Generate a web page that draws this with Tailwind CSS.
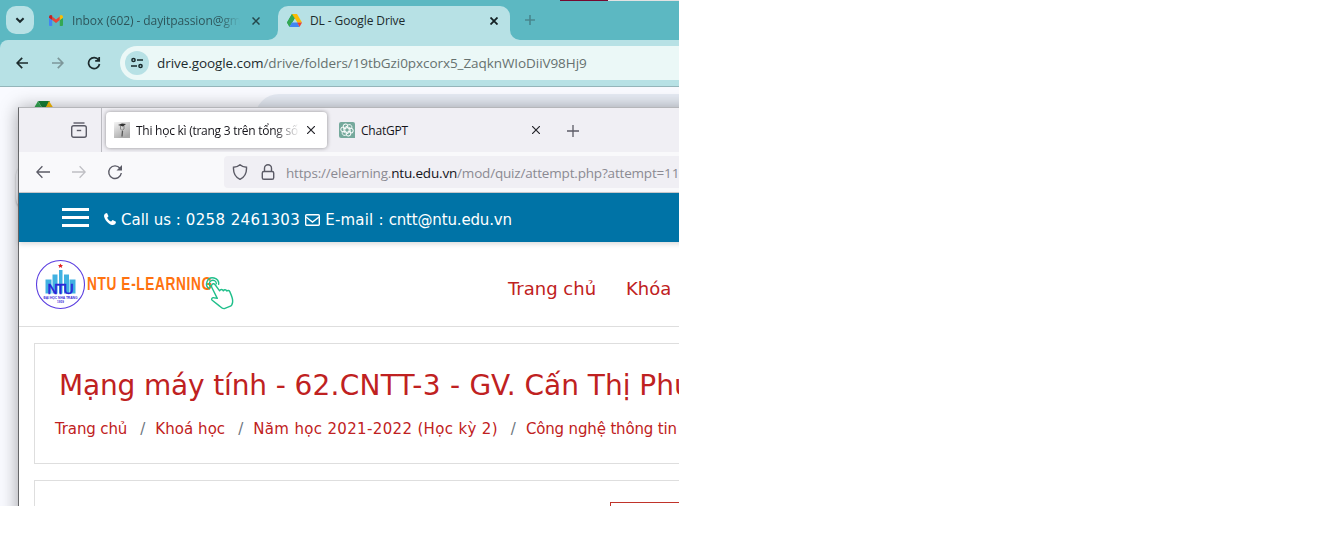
<!DOCTYPE html>
<html lang="vi">
<head>
<meta charset="utf-8">
<title>DL - Google Drive</title>
<script src="https://cdn.jsdelivr.net/npm/@tailwindcss/browser@4"></script>
</head>
<body class="bg-white">
<main class="relative flex h-[506px] w-[679px] flex-col overflow-hidden bg-[#f9faff] font-['Open_Sans','Noto_Sans',sans-serif]">

  <!-- Chrome tab strip -->
  <div class="flex h-10 shrink-0 items-end bg-[#5cb8c2]">
    <div class="ml-1.5 mb-[6px] flex h-7 w-7 items-center justify-center rounded-[10px] bg-[#b7e1e5]">
      <svg class="h-3 w-3" viewBox="0 0 12 12" fill="none" stroke="#1b2a2c" stroke-width="2"><path d="M2.400 4.200 6 7.800l3.600-3.600"/></svg>
    </div>
    <div class="flex h-[34px] w-[232px] items-center pb-[5px] pl-[15px]">
      <svg class="-mt-px h-[11px] w-[14px] shrink-0" viewBox="0 0 14 11"><path fill="#4285f4" d="M0 3v7a1 1 0 0 0 1 1h2.200V4.800z"/><path fill="#34a853" d="M14 3v7a1 1 0 0 1-1 1h-2.200V4.800z"/><path fill="#ea4335" d="M3.200 1.500 7 4.400l3.800-2.900v3.600L7 8 3.200 5.100z"/><path fill="#c5221f" d="M0 2C0 .2 2-.6 3.200.6v4.500L0 2.800z"/><path fill="#fbbc04" d="M14 2c0-1.800-2-2.600-3.200-1.400v4.500L14 2.800z"/></svg>
      <div class="mt-px ml-[9px] w-[168px] overflow-hidden whitespace-nowrap bg-linear-to-r from-[#2c5257] from-88% to-transparent bg-clip-text text-[12px] leading-5 tracking-[-0.08px] text-transparent">Inbox (602) - dayitpassion@gma</div>
      <svg class="ml-[12px] h-2 w-2 shrink-0" viewBox="0 0 8 8" stroke="#24474b" stroke-width="1.500"><path d="m.5.5 7 7m0-7-7 7"/></svg>
    </div>
    <div class="relative ml-[12px] flex h-[34px] w-[232px] items-center rounded-t-[10px] bg-[#b7e1e5] pb-[5px] pl-[9px]">
      <svg class="absolute bottom-0 -left-[10px] h-[10px] w-[10px]" viewBox="0 0 10 10"><path fill="#b7e1e5" d="M10 0v10H0A10 10 0 0 0 10 0"/></svg>
      <svg class="absolute -right-[10px] bottom-0 h-[10px] w-[10px]" viewBox="0 0 10 10"><path fill="#b7e1e5" d="M0 0v10h10A10 10 0 0 1 0 0"/></svg>
      <svg class="-mt-px h-[13px] w-[15px] shrink-0" viewBox="0 0 15 13"><path fill="#0f9d58" d="M5 0h2.500v4.700L2.500 12.500 0 8.600z"/><path fill="#34a853" d="M5 0h5L7.500 4.500 2.500 12.900 0 8.600z"/><path fill="#fbbc04" d="M5 0h5l5 8.600h-4.600z"/><path fill="#4285f4" d="M4.800 8.600h5.800l1.900 4.300h-10z"/><path fill="#ea4335" d="M10.200 8.600H15l-2.500 4.300z"/></svg>
      <span class="mt-px ml-2 whitespace-nowrap text-[12px] leading-5 tracking-[-0.11px] text-[#1d2b2d]">DL - Google Drive</span>
      <svg class="mr-3 ml-auto h-2 w-2 shrink-0" viewBox="0 0 8 8" stroke="#142124" stroke-width="1.800"><path d="m.5.5 7 7m0-7-7 7"/></svg>
    </div>
    <svg class="mb-[15px] ml-[15px] h-[10px] w-[10px]" viewBox="0 0 10 10" stroke="#48868e" stroke-width="1.600"><path d="M5 0v10M0 5h10"/></svg>
    <div class="ml-[25px] flex h-px flex-1 self-start"><div class="w-12 bg-[#76082f]"></div><div class="flex-1 bg-[#e2e2e2]"></div></div>
  </div>

  <!-- Chrome toolbar -->
  <div class="h-[46px] shrink-0 bg-[#5cb8c2]">
    <div class="flex h-[46px] items-center rounded-tl-[8px] bg-[#b7e1e5] pl-4">
      <svg class="h-3 w-3" viewBox="0 0 12 12" fill="none" stroke="#1c2b2d" stroke-width="1.700"><path d="M12 6H1.200M6.200.8 1.100 6l5.100 5.200"/></svg>
      <svg class="ml-6 h-3 w-3" viewBox="0 0 12 12" fill="none" stroke="#7d979a" stroke-width="1.700"><path d="M0 6h10.800M5.800.8 10.900 6l-5.100 5.200"/></svg>
      <svg class="ml-[23px] h-[14px] w-[14px]" viewBox="0 0 14 14" fill="none" stroke="#1c2b2d" stroke-width="1.700"><path d="M11.600 3.900A5.500 5.500 0 1 0 12.500 8M12.200.9v4H8.200"/></svg>
      <div class="ml-[19px] flex h-[34px] flex-1 items-center rounded-l-full bg-[#ebf8f7] pl-[5px]">
        <div class="flex h-6 w-6 items-center justify-center rounded-full bg-[#b7e1e5]">
          <svg class="h-3 w-3" viewBox="0 0 12 12" fill="none" stroke="#17282a" stroke-width="1.500"><circle cx="2.500" cy="3" r="1.600"/><path d="M6 3h6M0 9h6"/><circle cx="9.500" cy="9" r="1.600"/></svg>
        </div>
        <span class="ml-2 whitespace-nowrap text-[13.5px] leading-5 tracking-[-0.07px] text-[#66716f]"><span class="text-[#1c2b2d]">drive.google.com</span>/drive/folders/19tbGzi0pxcorx5_ZaqknWIoDiiV98Hj9</span>
      </div>
    </div>
  </div>

  <!-- Drive page behind the front window -->
  <div class="flex h-[420px] items-start border-t border-[#94b5ba]">
    <svg class="mt-[14px] ml-[34px] h-[20px] w-[20px]" viewBox="0 0 20 20"><path fill="#188038" d="M4 0h12l-6 10z"/><path fill="#34a853" d="M4 0 0 7l5 8 3-8z"/><path fill="#fbbc04" d="m15 0 5 8-5 5-3-7z"/></svg>
    <div class="mt-[7px] ml-[201px] h-12 flex-1 rounded-l-[24px] bg-[#e6ebf4]"></div>
  </div>
  <div class="absolute top-[164px] left-[16px] h-[46px] w-20 rounded-[12px] bg-[#f9faff] shadow-[0_1px_2px_rgba(0,0,0,.3)]"></div>

  <!-- Firefox window -->
  <section class="absolute top-[107px] left-[18px] flex h-[440px] w-[700px] flex-col border-t border-l border-t-[#b5b6ba] border-l-[#66676a] bg-white shadow-[0_1px_17px_rgba(0,0,0,.36)]">
    <div class="flex h-11 shrink-0 bg-[#f0eff4]">
      <div class="flex w-[83px] items-center border-r border-[#bcbcc2] pl-[52px]">
        <svg class="h-4 w-4" viewBox="0 0 16 16" fill="none" stroke="#5b5b66" stroke-width="1.400"><path d="M2.500 1h11"/><rect x=".7" y="3.700" width="14.600" height="11.600" rx="2"/><path d="M5.800 8.500h4.400"/></svg>
      </div>
      <div class="mt-1 ml-1 flex h-9 w-[221px] items-center rounded-[4px] bg-white pl-2 shadow-[0_0_4px_rgba(0,0,0,.4)]">
        <svg class="h-4 w-4 shrink-0" viewBox="0 0 16 16"><defs><linearGradient id="g" x1="0" y1="0" x2=".6" y2="1"><stop stop-color="#f5f5f5"/><stop offset="1" stop-color="#a8a8a8"/></linearGradient></defs><path fill="url(#g)" d="M0 0h16v16H0z"/><path fill="#333" d="m4 3 4-1.500L12 2 9 4.500z"/><path fill="none" stroke="#777" stroke-width=".8" d="M6.500 4v3l1.500 1.500L10 7V4"/><path fill="none" stroke="#555" stroke-width="1.300" d="M8.500 9 8 14.500"/></svg>
        <div class="mt-0.5 ml-1.5 w-[164px] overflow-hidden bg-linear-to-r from-[#15141a] from-84% to-transparent bg-clip-text text-[12px] leading-5 tracking-[-0.26px] whitespace-nowrap text-transparent">Thi học kì (trang 3 trên tổng số 3</div>
        <svg class="ml-[7px] h-2 w-2 shrink-0" viewBox="0 0 8 8" stroke="#25252b" stroke-width="1.200"><path d="m0 0 8 8m0-8L0 8"/></svg>
      </div>
      <div class="flex w-[216px] items-center pl-3">
        <svg class="h-4 w-4" viewBox="0 0 16 16" fill="none" stroke="#fff" stroke-width=".9"><path fill="#75a99c" stroke="none" d="M2 0h12a2 2 0 0 1 2 2v14H2a2 2 0 0 1-2-2V2a2 2 0 0 1 2-2"/><path id="p" d="M8 5.600V4.800a2.400 2.400 0 0 1 4.300-1.300c.8 1 .6 2.300 0 3.100M8 5.600l3.200 1.800v3.400"/><use href="#p" transform="rotate(60 8 8)"/><use href="#p" transform="rotate(120 8 8)"/><use href="#p" transform="rotate(180 8 8)"/><use href="#p" transform="rotate(240 8 8)"/><use href="#p" transform="rotate(300 8 8)"/></svg>
        <span class="mt-0.5 ml-1.5 text-[12px] leading-5 tracking-[-0.2px] text-[#15141a]">ChatGPT</span>
        <svg class="mr-[3px] ml-auto h-2 w-2" viewBox="0 0 8 8" stroke="#25252b" stroke-width="1.200"><path d="m0 0 8 8m0-8L0 8"/></svg>
      </div>
      <svg class="mt-[17px] ml-[24px] h-3 w-3" viewBox="0 0 12 12" stroke="#5b5b66" stroke-width="1.300"><path d="M6 0v12M0 6h12"/></svg>
    </div>
    <div class="flex h-[41px] shrink-0 items-center border-b border-[#cccccf] bg-[#f9f9fb] pl-[17px]">
      <svg class="h-[14px] w-[14px]" viewBox="0 0 14 14" fill="none" stroke="#5b5b66" stroke-width="1.300"><path d="M14 7H.8M6.400 1.300.8 7l5.600 5.700"/></svg>
      <svg class="ml-[22px] h-[14px] w-[14px]" viewBox="0 0 14 14" fill="none" stroke="#bfbfc4" stroke-width="1.300"><path d="M0 7h13.200M7.600 1.300 13.200 7l-5.600 5.700"/></svg>
      <svg class="ml-[21px] h-4 w-4" viewBox="0 0 16 16" fill="none" stroke="#5b5b66" stroke-width="1.400"><path d="M13 4.300A6.300 6.300 0 1 0 14.300 9"/><path fill="#5b5b66" stroke="none" d="M15 1v5.500H9.500z"/></svg>
      <div class="ml-[101px] flex h-8 flex-1 items-center rounded-l-[4px] bg-[#f0eff4] pl-2">
        <svg class="h-4 w-4" viewBox="0 0 16 16" fill="none" stroke="#5b5b66" stroke-width="1.400"><path d="M8 .8C6 2.600 4 3.300 1.500 3.300c-.3 5.200 1 9.400 6.500 12 5.500-2.600 6.800-6.800 6.500-12C12 3.300 10 2.600 8 .8z"/></svg>
        <svg class="ml-3 h-4 w-4" viewBox="0 0 16 16" fill="none" stroke="#5b5b66" stroke-width="1.400"><rect x="2.300" y="7.500" width="11.400" height="7.800" rx="1.600"/><path d="M4.500 7.500V4.300a3.500 3.500 0 0 1 7 0v3.200"/></svg>
        <span class="mt-0.5 ml-2.5 text-[13.5px] leading-5 tracking-[-0.18px] whitespace-nowrap text-[#8b8a92]">https://elearning.<span class="text-[#15141a]">ntu.edu.vn</span>/mod/quiz/attempt.php?attempt=11</span>
      </div>
    </div>

    <!-- E-learning page -->
    <div class="font-['Verdana','DejaVu_Sans',sans-serif]">
      <div class="relative flex h-[49px] items-center bg-[#0073a6] pl-[43px] text-[15px] text-white shadow-[0_2px_5px_rgba(0,0,0,.15)]">
        <div class="flex w-[27px] flex-col gap-[5px]"><i class="h-[3px] bg-white"></i><i class="h-[3px] bg-white"></i><i class="h-[3px] bg-white"></i></div>
        <svg class="mt-0.5 ml-[15px] h-3 w-3" viewBox="0 0 12 12" fill="#fff"><path d="M.3 1.700C.8.600 2 .2 3 0l1.500 3.300L3.200 4.700c.8 1.800 2 3 3.900 3.900l1.500-1.500L12 8.700c-.2 1.300-.6 2.300-1.600 2.900-1.300.8-3.500.2-5.500-1.200C2.500 8.700.9 6.300.2 4 0 3.100 0 2.400.3 1.700"/></svg>
        <span class="mt-1.5 ml-[5px] whitespace-nowrap"><span>Call us : </span><span class="tracking-[0.4px]">0258 2461303</span></span>
        <svg class="mt-1 ml-[5px] h-3 w-[15px]" viewBox="0 0 15 12" fill="none" stroke="#fff" stroke-width="1.400"><rect x=".7" y=".7" width="13.600" height="10.600" rx="1"/><path d="m1 3 6.500 5L14 3"/></svg>
        <span class="mt-1.5 ml-[5px] whitespace-nowrap"><span class="tracking-[0.2px]">E-mail : </span><span class="tracking-[-0.16px]">cntt@ntu.edu.vn</span></span>
      </div>
      <div class="flex h-[85px] border-b border-[#dedede]">
        <svg class="mt-[17px] ml-4 h-[52px] w-[202px] shrink-0" viewBox="0 0 202 52" font-family="Liberation Sans, sans-serif" font-weight="700">
          <circle cx="25.500" cy="25.500" r="24" fill="#fff" stroke="#5a3de0" stroke-width="1.100"/>
          <path fill="#e32222" d="m25.500 4.500.8 1.600 1.700.1-1.300 1.200.5 1.700-1.700-1-1.700 1 .5-1.700-1.300-1.200 1.700-.1z"/>
          <path fill="#41b1e1" d="M10.500 20.500h6v14h-6zM17.500 15.500h5v19h-5zM24 11h3.500v23.500h-3.500zM29 15.500h5v19h-5zM34.500 20.500h6v14h-6z"/>
          <text x="12.500" y="35" font-size="14" textLength="26" fill="#2b22d8" font-weight="400" stroke="#2b22d8" stroke-width=".5">NTU</text>
          <text x="8.500" y="40" font-size="3.300" textLength="34" fill="#3a2ad8">ĐẠI HỌC NHA TRANG</text>
          <text x="22" y="44.300" font-size="3" textLength="7" fill="#3a2ad8">1959</text>
          <text transform="translate(52 31) scale(.74 1)" font-size="18.500" textLength="169" fill="#ff7210">NTU E-LEARNING</text>
          <g transform="translate(13.500 3) scale(.93)" fill="none" stroke="#1fbf8a" stroke-width="1.500" stroke-linejoin="round" stroke-linecap="round">
            <path d="M173 29a6.500 6.500 0 1 1 10-5"/><path d="M174.500 26.500a3.800 3.800 0 1 1 6-3"/>
            <path fill="#fff" d="M176 24c1-1 2.500-.7 3.200.5l4.800 6.500c.8-1.800 3-2 4 0 .8-1.600 3-1.500 3.700.3 1-1.200 2.800-.8 3.300.8 2 4.300 3.500 7.500 3 11-.3 2.500-1 4-3 4.700l-6 2.300c-2.500.3-4-2-6-3.500l-7-5.400c-1.500-1.500 0-3.300 2-2.800l3.500.7-6-12c-.5-1-.3-2.300.5-3.100z"/>
          </g>
        </svg>
        <nav class="mt-[35px] ml-[271px] flex gap-[30px] text-[18px] leading-6 whitespace-nowrap text-[#bf2121]"><span>Trang chủ</span><span>Khóa</span></nav>
      </div>
      <div class="mt-4 ml-[15px] h-[121px] border border-[#dedede] px-5 pt-6 whitespace-nowrap text-[#bf2121]">
        <h1 class="ml-1 w-max text-[28px] leading-9"><span class="tracking-[-0.15px]">Mạng máy tính - </span><span class="tracking-[0.25px]">62.CNTT-3 - </span>GV. Cấn Thị Phượng</h1>
        <div class="mt-[15px] flex text-[15px] leading-5"><span class="tracking-[-0.13px]">Trang chủ</span><span class="mr-[10px] ml-[13px] text-[#6c757d]">/</span><span class="tracking-[0.06px]">Khoá học</span><span class="mr-[10px] ml-[13px] text-[#6c757d]">/</span><span class="tracking-[0.34px]">Năm học 2021-2022 (Học kỳ 2)</span><span class="mr-[10px] ml-[13px] text-[#6c757d]">/</span><span class="tracking-[-0.15px]">Công nghệ thông tin</span></div>
      </div>
      <div class="mt-4 ml-[15px] flex h-20 border border-[#dedede] pt-[21px] pl-[575px]"><div class="h-12 flex-1 border border-[#c0332a]"></div></div>
    </div>
  </section>
</main>
</body>
</html>
